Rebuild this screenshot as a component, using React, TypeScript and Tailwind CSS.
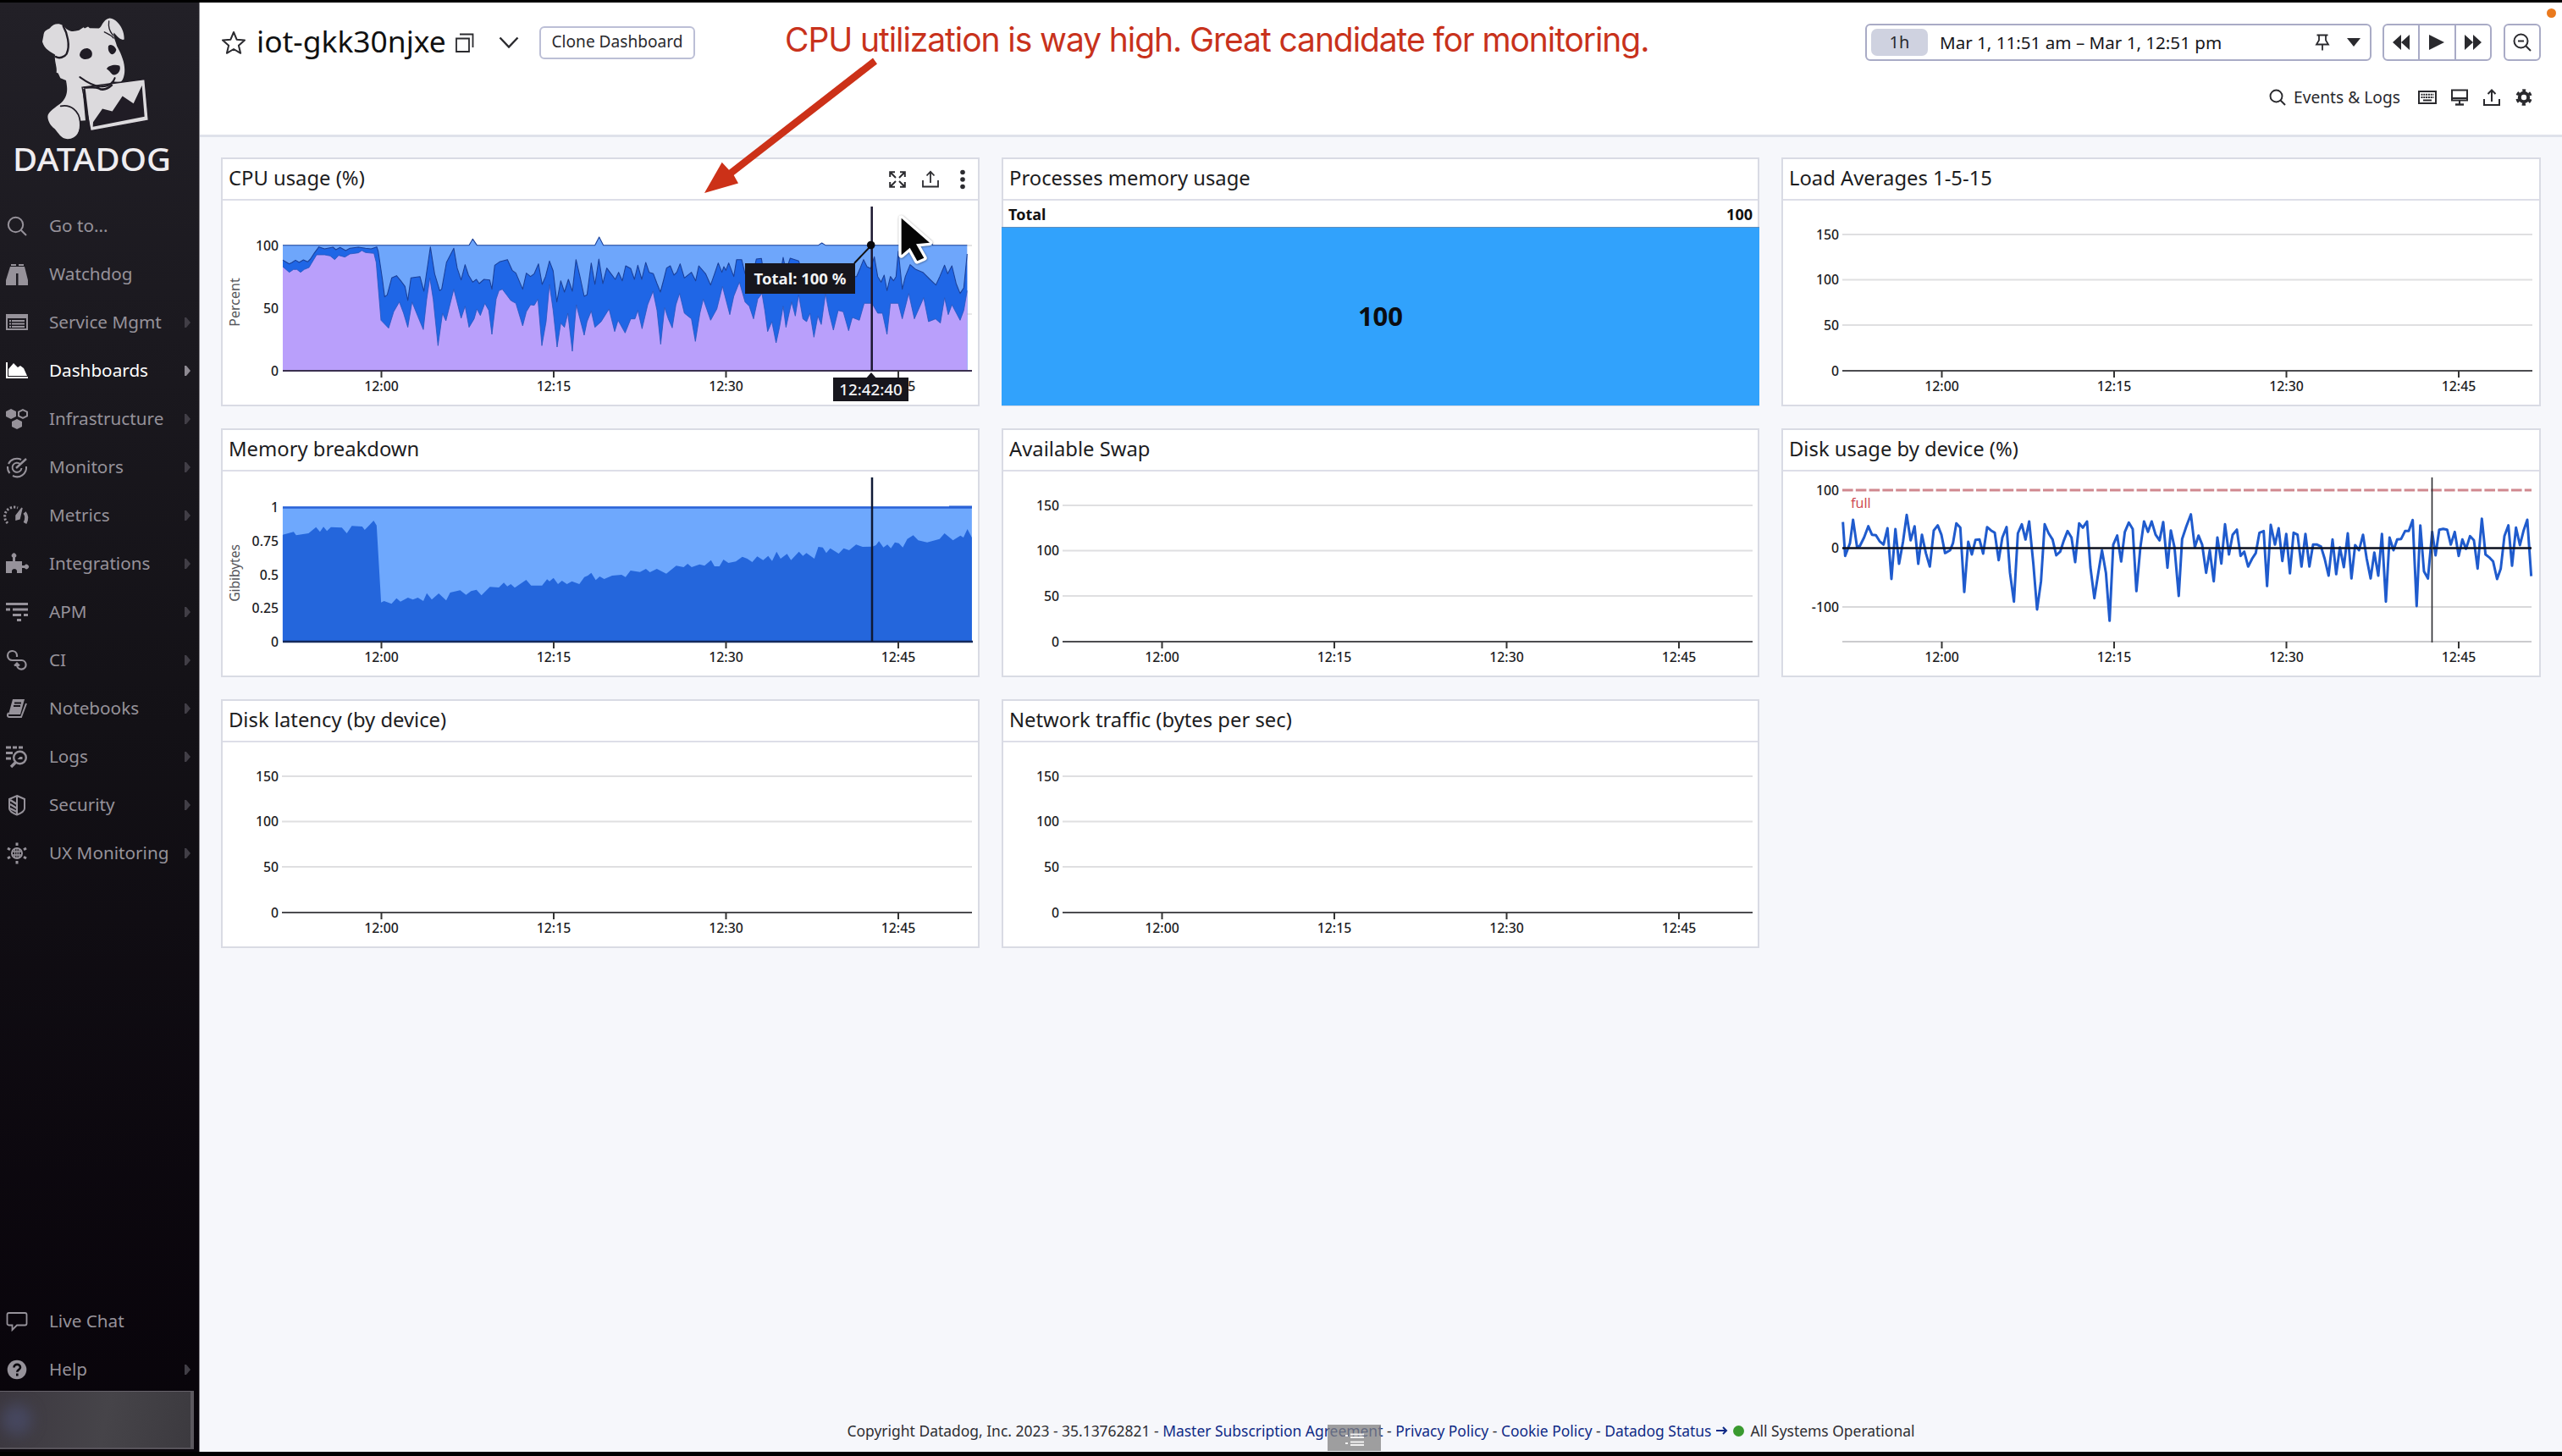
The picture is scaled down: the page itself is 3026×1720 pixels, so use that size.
import React from "react";

type P = [number, number];
const pts = (s: string): P[] =>
  s.trim().split(/\s+/).map((p) => p.split(",").map(Number) as P);
const shift = (p: P[], dx: number): P[] => p.map(([x, y]) => [x + dx, y]);
const join = (p: P[]) => p.map(([x, y]) => `${x},${y}`).join(" ");

/* ---------- chart series ---------- */

const cpuUpper = join([
  ...pts(`252,382 275,395 285,390 297,382 310,390 325,381 340,388 350,378 365,355 380,335 400,342 430,336 440,345 455,337 475,348 490,340 520,336 545,340 565,342 585,335 590,350 605,450 613,512 622,505 638,445 655,437 670,455 685,475 695,525 706,445 738,440 752,492 775,335 790,430 808,490 815,485 832,390 858,340 870,410 884,452 898,398 910,435 925,460 938,450 948,465 965,450 985,452 993,485 1003,400 1020,388 1048,380 1065,418 1078,428 1102,485 1115,428 1130,440 1143,430 1158,395 1171,468 1183,440 1197,385 1210,420 1223,530 1237,455 1250,495 1264,450 1278,492 1291,380 1305,440 1320,510 1330,505 1345,392`),
  ...shift(pts(`8,468 22,378 36,465 50,410 65,430 80,450 92,425 105,455 117,402 135,412 148,450 160,400 174,450 188,390 200,425 215,430 228,465 240,495 252,450 262,410 275,402 288,435 298,425 310,395 325,445 350,425 365,455 376,402 400,430 418,470 432,430 445,392 458,425 465,405 472,418 482,392 500,440 510,380 528,380 540,430 560,440 575,400 580,378 598,376 605,420 640,440 665,430 675,372 685,420 700,375 730,385 745,430 780,440 820,420 860,430 900,440 935,440 948,410 960,380 972,405 985,412 998,370 1010,440 1022,460 1033,435 1043,490 1055,440 1066,455 1075,440 1083,350 1097,485 1108,440 1125,398 1145,415 1170,425 1195,450 1216,470 1230,440 1247,400 1258,430 1273,402 1288,465 1302,500 1315,480 1327,360`), 1350),
]);

const cpuLower = join([
  ...pts(`252,405 275,425 290,415 302,415 315,425 328,415 345,408 372,363 400,363 420,367 436,380 450,365 472,371 490,360 520,356 532,348 545,355 575,358 583,390 600,595 627,623 645,565 665,530 680,570 695,620 710,530 730,580 750,628 762,520 773,445 785,520 802,685 818,570 830,597 858,485 884,588 898,545 912,620 930,590 940,555 952,578 968,535 982,560 993,645 1008,520 1018,490 1030,485 1045,505 1060,525 1078,535 1102,615 1115,565 1130,540 1143,542 1156,520 1170,685 1185,600 1197,468 1210,560 1224,690 1237,605 1250,620 1262,570 1278,705 1292,540 1305,590 1320,648 1330,600 1345,562`),
  ...shift(pts(`8,620 30,600 58,555 78,635 90,595 115,640 135,590 150,590 160,560 175,625 195,540 214,492 228,560 241,680 255,550 268,590 282,622 295,540 308,500 325,570 350,590 364,670 380,570 392,520 418,595 440,555 460,475 486,575 500,510 520,460 540,530 555,545 570,590 585,520 600,500 610,560 620,635 635,600 650,675 662,620 675,545 685,620 705,530 718,580 730,505 745,590 758,600 770,570 784,655 798,580 810,610 825,500 838,570 853,630 870,560 888,565 907,632 920,585 945,595 962,535 990,535 1010,570 1027,570 1043,645 1055,535 1083,535 1097,590 1120,500 1140,590 1173,515 1190,600 1215,590 1232,605 1247,515 1260,575 1273,540 1302,595 1315,560 1327,490`), 1350),
]);

const memory = join(
  pts(`143,395 165,385 170,397 195,390 210,368 218,385 225,367 232,382 240,368 262,370 272,390 282,364 303,366 308,378 318,360 326,345 332,362 341,635 347,630 362,640 372,620 380,632 395,618 405,625 415,618 426,630 433,602 443,625 457,603 472,628 480,600 500,592 512,608 522,595 533,590 543,610 560,580 578,582 588,565 595,578 602,570 610,583 633,555 643,575 665,575 675,553 680,560 688,548 697,570 705,558 715,570 725,560 740,570 750,545 757,540 764,530 773,556 781,543 790,552 806,540 825,537 833,545 843,522 862,527 874,516 882,528 896,516 915,533 935,505 950,510 958,498 966,510 982,500 992,505 1005,485 1012,507 1022,507 1030,483 1040,495 1055,490 1068,473 1078,480 1088,492 1098,472 1110,485 1120,470 1128,488 1137,455 1145,480 1158,463 1166,485 1182,455 1190,470 1197,460 1213,480 1221,438 1230,440 1237,460 1245,443 1262,462 1272,443 1283,450 1297,430 1310,438 1330,437 1337,432 1343,418 1352,440 1360,430 1367,443 1375,422 1383,425 1391,440 1400,410 1412,397 1422,415 1440,422 1465,410 1475,390 1492,415 1507,398 1513,405 1521,375 1530,405`)
);

const disk = join([
  ...pts(`260,350 268,470 285,425 296,342 310,438 320,435 335,405 350,365 363,395 377,397 390,418 404,430 418,372 432,552 446,375 459,498 473,420 486,325 500,415 514,365 527,498 540,395 554,460 568,508 582,380 596,362 609,395 622,460 640,450 650,425 662,355 676,370 690,598 704,420 717,465 730,413 744,412 757,462 771,368 785,380 798,388 812,485 825,405 840,368 852,530 866,632 880,390 894,358 907,412 920,348 935,500 948,660 962,560 975,358 989,390 1003,412 1016,468 1030,455 1043,415 1056,382 1070,405 1083,492 1097,355 1110,370 1125,348 1137,510 1151,620 1165,530 1178,450 1192,530 1205,700 1218,430 1232,398 1246,490 1259,385 1273,352 1287,375 1300,595 1314,440 1327,348 1341,385 1354,348 1368,395 1382,415 1395,350`),
  ...shift(pts(`0,512 12,380 25,440 40,612 52,410 67,365 83,323 97,440 110,398 123,430 137,530 150,450 164,560 177,405 191,497 204,358 218,465 231,395 246,377 259,470 272,455 286,508 300,480 313,460 326,388 341,382 353,577 366,360 381,430 394,372 407,488 421,392 434,532 447,388 461,395 475,508 489,392 503,508 516,430 530,430 544,437 557,480 571,540 585,412 598,535 611,440 625,510 639,390 652,550 665,432 679,450 693,395 706,480 720,550 733,458 747,540 760,392 774,632 787,405 801,450 814,412 828,410 842,382 855,382 869,343 883,648 896,362 909,525 923,550 938,385 950,468 963,377 977,374 991,377 1004,430 1018,385 1032,470 1045,412 1058,445 1072,400 1086,415 1099,515 1114,338 1127,465 1140,475 1154,490 1168,552 1181,515 1194,400 1208,362 1221,505 1235,370 1249,432 1262,380 1275,342 1289,542`), 1410),
]);

/* ---------- chart pieces (card-local coordinates) ---------- */

const TICKS: [number, string][] = [
  [189.5, "12:00"],
  [393, "12:15"],
  [596.5, "12:30"],
  [800, "12:45"],
];

function XTicks({ color = "#333" }: { color?: string }) {
  return (
    <g>
      {TICKS.map(([x, t]) => (
        <g key={t}>
          <line x1={x} x2={x} y1="252" y2="260" stroke={color} strokeWidth="2" />
          <text x={x} y="276" textAnchor="middle" className="fill-[#1d1d1f] text-[15.800px] font-medium">{t}</text>
        </g>
      ))}
    </g>
  );
}

function YLabels({ items }: { items: [number, string][] }) {
  return (
    <g>
      {items.map(([y, t]) => (
        <text key={t} x="68" y={y + 5.8} textAnchor="end" className="fill-[#1d1d1f] text-[15.800px] font-medium">{t}</text>
      ))}
    </g>
  );
}

function Chart({ children }: { children: React.ReactNode }) {
  return (
    <svg viewBox="2 51 892 240" className="block h-[240px] w-[892px] shrink-0 overflow-visible">
      {children}
    </svg>
  );
}

function EmptyChart() {
  return (
    <Chart>
      {[91, 144.5, 198].map((y) => (
        <line key={y} x1="72" x2="887" y1={y} y2={y} stroke="#dfdfe1" strokeWidth="1.800" />
      ))}
      <line x1="72" x2="887" y1="252" y2="252" stroke="#4c4c50" strokeWidth="2" />
      <YLabels items={[[91, "150"], [144.5, "100"], [198, "50"], [252, "0"]]} />
      <XTicks />
    </Chart>
  );
}

function Marks() {
  return (
    <div className="flex items-center text-[#2c2c30]">
      <svg viewBox="0 0 20 20" className="mr-[19px] h-[20px] w-[20px]" fill="none" stroke="currentColor" strokeWidth="2">
        <path d="M8 8L2 2M1.2 7V1.2H7M12 8l6-6M13 1.2h5.800V7M8 12l-6 6M1.200 13v5.800H7M12 12l6 6M18.800 13v5.800H13" />
      </svg>
      <svg viewBox="0 0 20 21" className="mr-[25px] h-[21px] w-[20px]" fill="none" stroke="currentColor" strokeWidth="1.800">
        <path d="M1 12v7.500h18V12M10 15V2M5.500 6.500L10 1.800l4.500 4.700" />
      </svg>
      <svg viewBox="0 0 6 24" className="h-[24px] w-[6px]" fill="currentColor">
        <circle cx="3" cy="3.500" r="2.800" /><circle cx="3" cy="12" r="2.800" /><circle cx="3" cy="20.500" r="2.800" />
      </svg>
    </div>
  );
}

function Card({ title, actions, children }: { title: string; actions?: boolean; children: React.ReactNode }) {
  return (
    <section className="relative flex h-[294px] flex-col border-2 border-[#d9dbe4] bg-white">
      <header className="flex h-[49px] shrink-0 items-center justify-between border-b-2 border-[#dddee8] pr-[15px] pl-[7px]">
        <h2 className="-mt-px text-[23.800px] leading-none text-[#1c1c1e]">{title}</h2>
        {actions && <Marks />}
      </header>
      {children}
    </section>
  );
}

function CpuChart() {
  return (
    <Chart>
      <line x1="880" x2="887" y1="104" y2="104" stroke="#e3e3e3" strokeWidth="2" />
      <line x1="880" x2="887" y1="185" y2="185" stroke="#e9e9e9" strokeWidth="2" />
      <g transform="translate(-11 -6) scale(.33333)">
        <path d="M252 329H912L925 307L940 329H1358L1373 300L1388 329H2150L2162 321L2175 329H2533L2545 310L2555 329H2677V773H252Z" fill="#6ea6fb" />
        <polygon points={`252,773 ${cpuUpper} 2677,773`} fill="#1f66e6" />
        <polygon points={`252,773 ${cpuLower} 2677,773`} fill="#b99ffb" />
        <g fill="none" stroke="#1a4099" strokeWidth="3.200" strokeLinejoin="round">
          <path d="M252 329H912L925 307L940 329H1358L1373 300L1388 329H2150L2162 321L2175 329H2533L2545 310L2555 329H2677" />
          <polyline points={cpuUpper} />
          <polyline points={cpuLower} stroke="#2455bd" strokeWidth="2.400" />
        </g>
      </g>
      <line x1="73" x2="887" y1="252" y2="252" stroke="#3a3050" strokeWidth="2" />
      <YLabels items={[[104, "100"], [178, "50"], [252, "0"]]} />
      <text transform="translate(22 171) rotate(-90)" textAnchor="middle" className="fill-[#55555a] text-[16px]">Percent</text>
      <XTicks />
      <line x1="768.700" x2="768.700" y1="58" y2="252" stroke="#1b1730" strokeWidth="2.500" />
      <line x1="748" x2="768" y1="125" y2="104" stroke="#111" strokeWidth="2" />
      <circle cx="767.700" cy="103.500" r="4.800" fill="#08080c" />
      <rect x="619" y="125" width="130" height="36" fill="#17161d" />
      <text x="684" y="149.500" textAnchor="middle" className="fill-[#f3f3f5] text-[18.500px] font-bold">Total: 100 %</text>
      <path d="M761 262L768 254L775 262Z" fill="#17161d" />
      <rect x="723" y="260" width="89" height="28" fill="#17161d" />
      <text x="767.500" y="281" textAnchor="middle" className="fill-[#f3f3f5] text-[18.800px] font-medium">12:42:40</text>
      <path
        d="M1094 233L1194 320L1146 325L1174 374L1150 385L1124 338L1094 364Z"
        transform="translate(439 -6) scale(.33333)"
        fill="#050505" stroke="#fff" strokeWidth="20" strokeLinejoin="round"
        style={{ paintOrder: "stroke" }}
        className="drop-shadow-[1px_2px_3px_rgba(0,0,0,0.4)]"
      />
    </Chart>
  );
}

function MemoryChart() {
  return (
    <Chart>
      <g transform="translate(-11 -6) scale(.58685 .33333)">
        <rect x="143" y="296" width="1387" height="479" fill="#6ea8fd" />
        <polygon points={`143,775 ${memory} 1530,775`} fill="#2466dc" />
      </g>
      <line x1="73" x2="887" y1="93.500" y2="93.500" stroke="#2b62d6" strokeWidth="2.500" />
      <line x1="860" x2="887" y1="92.500" y2="92.500" stroke="#2b62d6" strokeWidth="2" />
      <line x1="73" x2="888" y1="252" y2="252" stroke="#152a5c" strokeWidth="2.500" />
      <YLabels items={[[93, "1"], [133, "0.75"], [173, "0.5"], [212.500, "0.25"], [252, "0"]]} />
      <text transform="translate(22 171) rotate(-90)" textAnchor="middle" className="fill-[#55555a] text-[15.500px]">Gibibytes</text>
      <XTicks />
      <line x1="769" x2="769" y1="58" y2="252" stroke="#0f1a36" strokeWidth="2.500" />
    </Chart>
  );
}

function DiskChart() {
  return (
    <Chart>
      <line x1="72" x2="886" y1="211" y2="211" stroke="#d8d8da" strokeWidth="2" />
      <line x1="72" x2="886" y1="252" y2="252" stroke="#cbcbce" strokeWidth="2" />
      <line x1="72" x2="886" y1="73" y2="73" stroke="#d0888f" strokeWidth="3" strokeDasharray="12.600 3.200" />
      <text x="82" y="94" className="fill-[#cf4a55] text-[16px]">full</text>
      <polyline points={disk} transform="translate(-14 -6) scale(.33333)" fill="none" stroke="#1f5bcd" strokeWidth="9" strokeLinejoin="round" />
      <line x1="72" x2="886" y1="141.500" y2="141.500" stroke="#0b0f1c" strokeWidth="2.500" />
      <line x1="768.500" x2="768.500" y1="58" y2="253" stroke="#2c2c31" strokeWidth="1.600" />
      <YLabels items={[[73, "100"], [141.500, "0"], [211, "-100"]]} />
      <XTicks />
    </Chart>
  );
}

/* ---------- sidebar ---------- */

function Logo() {
  return (
    <svg viewBox="0 3 235 204" className="block h-[204px] w-[235px] shrink-0 overflow-visible">
      <g transform="scale(.33333 .35714)">
        <g fill="#dcdadd">
          <path d="M228 88C245 108 262 104 280 100L296 90L300 94L312 88L318 93L350 94C362 90 362 66 388 60C416 62 442 98 440 130C430 136 414 120 404 108C398 118 412 140 414 152C424 168 440 200 441 222C444 246 436 266 428 271L404 270L408 262L388 282L362 290L292 290L303 398L284 400C286 430 274 460 240 460C215 458 208 440 194 426C176 415 166 392 170 380C180 360 205 352 222 335C246 310 236 280 234 266L214 258L206 242L200 240C204 222 190 200 196 178Z" />
          <path d="M150 138L154 118C156 100 166 100 176 94C188 78 208 76 222 84C232 96 244 130 240 160C236 184 216 190 200 184C180 172 158 164 150 138Z" />
          <path d="M291 289L513 262L526 398L321 433Z" stroke="#201c25" strokeWidth="4" />
        </g>
        <g fill="none" stroke="#201c25" strokeLinecap="round">
          <path d="M224 86C238 110 250 150 236 178C228 190 210 194 198 188" strokeWidth="7" />
          <path d="M386 70C382 96 392 108 400 116M370 106C382 112 398 118 402 126" strokeWidth="4" />
          <path d="M283 255C308 272 340 288 362 286C386 286 402 272 407 258" strokeWidth="6" />
          <path d="M215 351C250 344 280 366 284 402C286 424 282 436 278 444" strokeWidth="5" />
          <path d="M298 294L316 432" strokeWidth="8" strokeLinecap="butt" />
          <path d="M296 290C320 290 335 286 350 292C368 302 384 292 398 280" strokeWidth="7" strokeLinecap="butt" />
        </g>
        <path d="M329 419L330 404L363 360L398 368L434 318L473 342L503 283L512 386Z" fill="#201c25" />
        <path d="M282 182C284 166 298 158 312 160C328 164 330 182 322 190C308 200 286 198 282 182ZM384 152C392 144 406 150 412 164C410 178 396 184 390 176C384 170 382 162 384 152ZM378 228C384 216 410 212 424 218C430 232 418 248 404 248C394 246 392 236 378 228Z" fill="#201c25" />
      </g>
      <text x="15" y="202" textLength="187" lengthAdjust="spacingAndGlyphs" className="fill-[#efedf0] text-[37.500px] font-medium">DATADOG</text>
    </svg>
  );
}

const ICONS: Record<string, React.ReactNode> = {
  search: <g fill="none" stroke="currentColor" strokeWidth="2"><circle cx="11.500" cy="11.500" r="8.700" /><path d="M17.700 17.700L24 24" /></g>,
  watchdog: <path fill="currentColor" d="M6 1h6v2H6zM15 1h6v2h-6zM5 4h7v22H0V20zM14.500 4H22l4 16v6H14.500zM12 4h3v8h-3z" />,
  service: <g><path fill="currentColor" d="M0 3h26v5H0z" /><rect x="1" y="4" width="24" height="17" fill="none" stroke="currentColor" strokeWidth="2" /><path d="M4 11h2m1 0h15M4 14.500h2m1 0h15M4 18h2m1 0h15" stroke="currentColor" strokeWidth="1.800" /></g>,
  dashboards: <g fill="currentColor"><path d="M0 3h2v17h24v2H0z" /><path d="M3 19V11L9 4l5 5 3-2 4 3 4 9z" /></g>,
  infra: <g><path fill="currentColor" d="M6 1l6 3v6l-6 3-6-3V4zM13 13l6 3v6l-6 3-6-3v-6z" /><path d="M20 2.200l5 2.500v4.800l-5 2.500-5-2.500V4.700z" fill="none" stroke="currentColor" strokeWidth="2" /></g>,
  monitors: <g fill="none" stroke="currentColor" strokeWidth="2"><path d="M18 4A11 11 0 0 0 3 9M2 12A11 11 0 0 0 4.500 20M8 23A11 11 0 0 0 24 12" /><path d="M17 9.500A5.500 5.500 0 1 0 18.500 14" /><path d="M12 14l12-11" strokeWidth="2.400" /></g>,
  metrics: <g fill="none" stroke="currentColor"><path d="M2 22A11 11 0 0 1 14 4" strokeWidth="3" strokeDasharray="2.200 2" /><path d="M22 9.500C25 13 25 17 22.500 22" strokeWidth="4" /><path d="M19 4L12 13v5l4-1z" fill="currentColor" strokeWidth="1.500" /></g>,
  integrations: <path fill="currentColor" d="M0 10h8V5.500a2.700 2.700 0 1 1 3 0V10h8v5h3a2.700 2.700 0 1 1 0 3h-3v6h-6v-3a3.200 3.200 0 0 0-6 0v3H0z" />,
  apm: <path fill="currentColor" d="M0 2h26v3H0zM0 8.500h5v3H0zM8 8.500h18v3H8zM8 15h10v3H8zM21 15h5v3h-5zM13 21h5v3h-5z" />,
  ci: <g fill="none" stroke="currentColor" strokeWidth="2.200"><path d="M13 9V7A5.500 5.500 0 1 0 7.500 13H18.500A5.300 5.300 0 1 1 13 18.500V17M10 19.500l3-3 3 3" /></g>,
  notebooks: <g><path fill="currentColor" d="M8 2h14l-5 18H3z" /><path d="M10 6.500h8M9 10h8" stroke="#17141a" strokeWidth="1.800" /><path d="M3 18c-2 3-1 5 1 5h14l6-16" fill="none" stroke="currentColor" strokeWidth="2" /></g>,
  logs: <g fill="none" stroke="currentColor" strokeWidth="2.400"><path d="M0 2h6m2 0h5m2 0h5M0 8.500h8M0 15h6" strokeWidth="3" /><circle cx="16.500" cy="14" r="7.300" /><path d="M11.500 19.500L6 25" strokeWidth="3.400" /><path d="M13.500 16l3-3h3v3z" fill="currentColor" strokeWidth="0" /></g>,
  security: <g fill="none" stroke="currentColor" strokeWidth="2"><path d="M13 2l9 4v11c0 3-5 6-9 7.500C9 23 4 20 4 17V6zM13 2v22" /><path d="M5 7l8 5M5 12l8 5M5 17l8 4" strokeWidth="2.500" /></g>,
  ux: (
    <g fill="none" stroke="currentColor">
      <circle cx="13" cy="13" r="6" strokeWidth="2" />
      <path d="M10.500 8v10M13 7v12M15.500 8v10M8 11h10M8 15h10" strokeWidth="1.300" />
      <path d="M13 .5v3.500M13 22v3.500M2 7l3 1.800M21 17.200l3 1.800M24 7l-3 1.800M5 17.200L2 19" strokeWidth="3" />
    </g>
  ),
  chat: <path d="M3.500 3h19c1.200 0 2 .8 2 2v10.500c0 1.200-.8 2-2 2H13L7.500 23v-5.500h-4c-1.200 0-2-.8-2-2V5c0-1.200.8-2 2-2z" fill="none" stroke="currentColor" strokeWidth="1.800" />,
  help: <g><circle cx="13" cy="13" r="11.300" fill="currentColor" /><path d="M9.500 10.500c0-5 7.500-4.500 7.500-.3 0 3-3.700 2.800-3.700 5.500M13.300 17.500v3" fill="none" stroke="#0a070d" strokeWidth="2.600" /></g>,
};

const NAV: [string, string, boolean][] = [
  ["search", "Go to...", false],
  ["watchdog", "Watchdog", false],
  ["service", "Service Mgmt", true],
  ["dashboards", "Dashboards", true],
  ["infra", "Infrastructure", true],
  ["monitors", "Monitors", true],
  ["metrics", "Metrics", true],
  ["integrations", "Integrations", true],
  ["apm", "APM", true],
  ["ci", "CI", true],
  ["notebooks", "Notebooks", true],
  ["logs", "Logs", true],
  ["security", "Security", true],
  ["ux", "UX Monitoring", true],
];

function NavRow({ icon, label, arrow }: { icon: string; label: string; arrow: boolean }) {
  const active = label === "Dashboards";
  return (
    <a className={`flex h-[57px] shrink-0 items-center pr-[10px] pl-[7px] ${active ? "text-white" : "text-[#96929a]"}`}>
      <svg viewBox="0 0 26 26" className="h-[26px] w-[26px] shrink-0 overflow-visible">{ICONS[icon]}</svg>
      <span className="-mt-px ml-[25px] flex-1 text-[20.700px] leading-none whitespace-nowrap">{label}</span>
      {arrow && (
        <svg viewBox="0 0 7 12" className={`h-[12px] w-[7px] ${active ? "text-[#8e8a92]" : "text-[#413e46]"}`} fill="currentColor">
          <path d="M0 0h2l5 6-5 6H0z" />
        </svg>
      )}
    </a>
  );
}

function Sidebar() {
  return (
    <aside className="flex w-[236px] shrink-0 flex-col border-r border-[#8a888e] bg-linear-to-b from-[#222027] via-[#131116] via-50% to-[#08040a]">
      <Logo />
      <nav className="mt-[31px] flex flex-col">
        {NAV.map(([icon, label, arrow]) => (
          <NavRow key={label} icon={icon} label={label} arrow={arrow} />
        ))}
      </nav>
      <div className="flex-1" />
      <NavRow icon="chat" label="Live Chat" arrow={false} />
      <NavRow icon="help" label="Help" arrow />
      <div className="-mt-[3px] mb-[3px] flex h-[69px] w-[229px] shrink-0 items-center border-t border-r-4 border-b-2 border-t-[#66626a] border-r-[#5c585f] border-b-[#57535a] bg-[linear-gradient(100deg,#3c3840,#464449_55%,#3c3a3f)] pl-[2px]">
        <div className="h-[36px] w-[36px] rounded-full bg-[#46475f] blur-[8px]" />
      </div>
    </aside>
  );
}

/* ---------- top bar ---------- */

const BTN = "flex h-[44px] items-center border-2 border-[#a9abc6] bg-white";

function TopBar() {
  return (
    <header className="flex h-[159px] shrink-0 flex-col border-b-[3px] border-[#dfe2ea] bg-white pt-[25px] pr-[25px] pl-[25px] text-[#2a2a2e]">
      <div className="flex h-[44px] items-center">
        <svg viewBox="0 0 30 28" className="h-[28px] w-[30px]" fill="none" stroke="currentColor" strokeWidth="2" strokeLinejoin="round">
          <path d="M15 2l3.600 8.700 9.400.8-7.100 6.200 2.200 9.100L15 22l-8.100 4.800 2.200-9.100L2 11.500l9.400-.8z" />
        </svg>
        <h1 className="-mt-[2px] ml-[12px] w-[235px] text-[35.400px] leading-none whitespace-nowrap text-[#111]">iot-gkk30njxe</h1>
        <svg viewBox="0 0 22 23" className="h-[23px] w-[22px]" fill="none" stroke="currentColor" strokeWidth="1.800">
          <path d="M1 6.500h15v15.500H1zM5 1.500h15.500V17" />
        </svg>
        <svg viewBox="0 0 24 14" className="ml-[29px] h-[14px] w-[24px]" fill="none" stroke="currentColor" strokeWidth="2.400">
          <path d="M1.500 1.500L12 12.500 22.500 1.500" />
        </svg>
        <button className="ml-[24px] h-[39px] w-[184px] rounded-[6px] border-2 border-[#bcbfd6] text-[19.100px] leading-none whitespace-nowrap">Clone Dashboard</button>
        <div className="flex-1" />
        <div className={`${BTN} w-[598px] rounded-[6px] pl-[5px]`}>
          <span className="flex h-[32px] w-[67px] items-center justify-center rounded-[7px] bg-[#cfd2e0] text-[20px] leading-none">1h</span>
          <span className="ml-[14px] flex-1 text-[20.600px] leading-none whitespace-nowrap text-[#17171a]">Mar 1, 11:51 am – Mar 1, 12:51 pm</span>
          <svg viewBox="0 0 18 20" className="h-[20px] w-[18px]" fill="none" stroke="currentColor" strokeWidth="1.800">
            <path d="M2.500 1.500h13M5 1.500v6L2 12.500h14l-3-5v-6M9 12.500V19.500" />
          </svg>
          <svg viewBox="0 0 16 10" className="mr-[11px] ml-[20px] h-[10px] w-[16px]" fill="currentColor"><path d="M0 0h16L8 10z" /></svg>
        </div>
        <div className={`${BTN} ml-[13px] w-[129px] rounded-[6px] divide-x-2 divide-[#a9abc6]`}>
          <span className="flex h-full flex-1 items-center justify-center">
            <svg viewBox="0 0 20 18" className="h-[18px] w-[20px]" fill="currentColor"><path d="M10 0v18L0 9zM20 0v18L10 9z" /></svg>
          </span>
          <span className="flex h-full flex-1 items-center justify-center">
            <svg viewBox="0 0 18 18" className="h-[18px] w-[18px]" fill="currentColor"><path d="M0 0l18 9L0 18z" /></svg>
          </span>
          <span className="flex h-full flex-1 items-center justify-center">
            <svg viewBox="0 0 20 18" className="h-[18px] w-[20px]" fill="currentColor"><path d="M0 0l10 9L0 18zM10 0l10 9-10 9z" /></svg>
          </span>
        </div>
        <div className={`${BTN} ml-[14px] w-[44px] justify-center rounded-[6px]`}>
          <svg viewBox="0 0 22 22" className="h-[22px] w-[22px]" fill="none" stroke="currentColor" strokeWidth="2"><circle cx="9.500" cy="9.500" r="8" /><path d="M15.500 15.500l5.500 5.500M6 9.500h7" /></svg>
        </div>
      </div>
      <div className="mt-[32px] flex h-[22px] items-center justify-end pr-[10px]">
        <svg viewBox="0 0 20 20" className="h-[20px] w-[20px]" fill="none" stroke="currentColor" strokeWidth="1.900"><circle cx="8.500" cy="8.500" r="7" /><path d="M13.500 13.500l5.500 5.500" /></svg>
        <span className="ml-[9px] w-[147px] text-[19.200px] leading-none whitespace-nowrap">Events &amp; Logs</span>
        <svg viewBox="0 0 22 16" className="h-[16px] w-[22px]" fill="none" stroke="currentColor" strokeWidth="2"><rect x="1" y="1" width="20" height="14" /><path d="M3.500 4.800h15M3.500 8h15" strokeDasharray="2 .8" /><path d="M6 11.500h10" /></svg>
        <svg viewBox="0 0 20 20" className="ml-[17px] h-[20px] w-[20px]" fill="none" stroke="currentColor" strokeWidth="2"><rect x="1" y="1.500" width="18" height="12" /><path d="M1 11h18M10 14v4" /><path d="M5 18.500h10" strokeWidth="2.400" /></svg>
        <svg viewBox="0 0 20 20" className="ml-[18px] h-[20px] w-[20px]" fill="none" stroke="currentColor" strokeWidth="2"><path d="M1 12v7h18v-7M10 15V2M5.500 6L10 1.500 14.500 6" /></svg>
        <svg viewBox="0 0 20 20" className="ml-[18px] h-[20px] w-[20px]" fill="none" stroke="currentColor"><circle cx="10" cy="10" r="5.200" strokeWidth="4" /><circle cx="10" cy="10" r="8.300" strokeWidth="3" strokeDasharray="4.200 4.492" strokeDashoffset="2.100" transform="rotate(-90 10 10)" /></svg>
      </div>
    </header>
  );
}

function ProcessMemory() {
  return (
    <div className="flex flex-1 flex-col">
      <div className="flex h-[31px] items-center justify-between px-[6px] text-[18px] leading-none font-bold text-[#111]">
        <span>Total</span>
        <span>100</span>
      </div>
      <div className="-mx-[2px] -mb-px flex flex-1 items-center justify-center border-t border-[#5d8fc0] bg-[#31a2fc] pb-[2px] text-[31px] leading-none font-bold text-[#0b0d12]">
        100
      </div>
    </div>
  );
}

function Footer() {
  return (
    <footer className="relative mb-[12px] flex h-[26px] items-center justify-center text-[17.460px] whitespace-pre text-[#2e2e32]">
      <span>Copyright Datadog, Inc. 2023 - 35.13762821 - </span>
      <a className="text-[#0f2a86]">Master Subscription Agreement</a>
      <span> - </span>
      <a className="text-[#0f2a86]">Privacy Policy</a>
      <span> - </span>
      <a className="text-[#0f2a86]">Cookie Policy</a>
      <span> - </span>
      <a className="text-[#0f2a86]">Datadog Status</a>
      <svg viewBox="0 0 14 12" className="mx-[6px] h-[12px] w-[14px]" fill="none" stroke="#0f2a86" strokeWidth="2"><path d="M0 6h12M8 2l4 4-4 4" /></svg>
      <span className="mr-[7px] h-[13px] w-[13px] rounded-full bg-[#3a9a2f]" />
      <span>All Systems Operational</span>
      <div className="absolute top-[6px] left-[1332px] flex h-[31px] w-[63px] items-center justify-center bg-[#808080]/75">
        <svg viewBox="0 0 22 16" className="mt-[5px] h-[16px] w-[22px]" stroke="#f1f1f1" strokeWidth="2"><path d="M0 3h3M0 12h3M6 1.500h16M6 5h16M6 10.500h16M6 14h16" /></svg>
      </div>
    </footer>
  );
}

export default function App() {
  return (
    <div className="relative flex h-[1720px] w-[3026px] overflow-hidden bg-black pt-[3px] pb-[5px] font-['Noto_Sans',sans-serif]">
      <Sidebar />
      <main className="flex flex-1 flex-col bg-[#f6f7fb]">
        <TopBar />
        <div className="grid grid-cols-[896px_895px_897px] gap-[26px] pt-[24px] pl-[25px]">
          <Card title="CPU usage (%)" actions><CpuChart /></Card>
          <Card title="Processes memory usage"><ProcessMemory /></Card>
          <Card title="Load Averages 1-5-15"><EmptyChart /></Card>
          <Card title="Memory breakdown"><MemoryChart /></Card>
          <Card title="Available Swap"><EmptyChart /></Card>
          <Card title="Disk usage by device (%)"><DiskChart /></Card>
          <Card title="Disk latency (by device)"><EmptyChart /></Card>
          <Card title="Network traffic (bytes per sec)"><EmptyChart /></Card>
        </div>
        <div className="flex-1" />
        <Footer />
      </main>

      <div className="absolute top-[22px] left-[927px] font-['Inter',sans-serif] text-[39px] leading-[50px] tracking-[-1.080px] whitespace-nowrap text-[#c8321c]">
        CPU utilization is way high. Great candidate for monitoring.
      </div>
      <svg viewBox="825 60 220 175" className="absolute top-[60px] left-[825px] h-[175px] w-[220px]">
        <path d="M832 228L852.700 191.700L861 200.700L1031 68.500L1036 75.500L866.700 207L872 216.500Z" fill="#cc3118" />
      </svg>
      <div className="absolute top-[10px] left-[3008px] h-[11px] w-[11px] rounded-full bg-[#ea7a1e]" />
    </div>
  );
}
